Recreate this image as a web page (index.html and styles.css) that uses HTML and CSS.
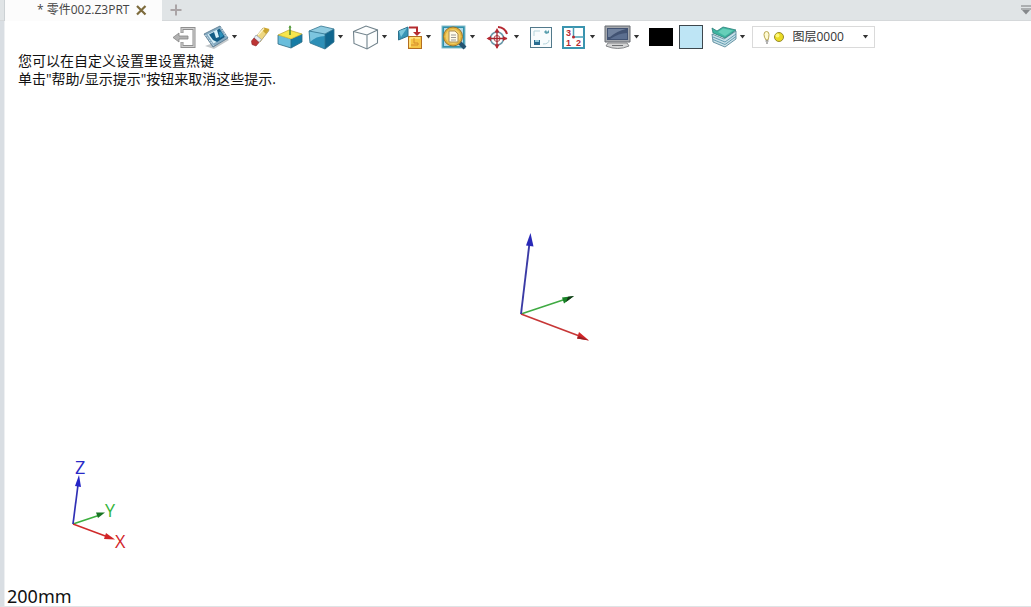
FILE: index.html
```html
<!DOCTYPE html>
<html lang="zh-CN">
<head>
<meta charset="utf-8">
<title>零件002.Z3PRT</title>
<link rel="stylesheet" href="styles.css">
</head>
<body>
<div class="app">
  <header class="tabbar">
    <div class="tab">
      <span class="tab-name">* 零件002.Z3PRT</span>
      <button class="tab-close" aria-label="关闭"><svg width="12" height="12" viewBox="0 0 12 12"><path d="M2 2L10.500 10.500M10.500 2L2 10.500" stroke="#7d6b3c" stroke-width="2.200"/></svg></button>
    </div>
    <button class="tab-add" aria-label="新建"><svg width="12" height="12" viewBox="0 0 12 12"><path d="M6 0.5V11.5M0.5 6H11.5" stroke="#aaa4a6" stroke-width="2"/></svg></button>
    <button class="tab-list" aria-label="标签列表"><svg width="10" height="10" viewBox="0 0 10 10"><path d="M0 1H10M0 4H10" stroke="#9a9da0" stroke-width="1.3"/><path d="M1 5H9L5 9.5Z" fill="#85888b"/></svg></button>
  </header>

  <main class="work">
    <div class="toolbar" role="toolbar">
      <button class="tool" aria-label="退出"><svg class="icon" viewBox="0 0 26 26"><path d="M11 9V4.500H23V22.500H11V18" fill="none" stroke="#909090" stroke-width="3"/><path d="M11 8.500V4.500H23V22.500H11V18.500" fill="none" stroke="#cfcfcf" stroke-width="1.200"/><path d="M2 13.500L8 9V12H17V15H8V18Z" fill="#b2b2b2" stroke="#858585" stroke-width=".8"/></svg></button>
      <button class="tool drop" aria-label="外观"><svg class="icon" viewBox="0 0 26 26"><path d="M2 22L11 25L26 16L24 14Z" fill="#c3c8cb"/><path d="M1 10L17 2L25 14L10 23Z" fill="#86abc2" stroke="#52758c" stroke-width=".8"/><path d="M4.500 10.500L16.500 4.500L22 13L10.500 19.500Z" fill="#d9f0f8"/><path d="M6 10.500L11 8L13 14L16 13L14 6L16.500 4.500L22 13L14 18L10 16Z" fill="#145c85"/><path d="M16 8L18 7.500L20.500 12L17 14Z" fill="#2a8fba"/><path d="M2.500 11L10.500 21.500M18 3.500L24 13" stroke="#e1edf2" stroke-dasharray="1.500 1.500"/></svg><i class="caret"></i></button>
      <button class="tool narrow" aria-label="擦除"><svg class="icon" viewBox="0 0 24 26"><path d="M8 14L16 4L22 6.500L13 18Z" fill="#eed781" stroke="#a18c52" stroke-width=".7"/><path d="M15 6L17 3.500L22.500 5L19 10Z" fill="#cba52e"/><path d="M9 11L14.500 15.500L12 18.500L7 14Z" fill="#e8edf5" stroke="#8491a5" stroke-width=".6"/><path d="M7 14L12 18.500L9 22L5 20.500L4.500 17Z" fill="#bd3535" stroke="#8a2225" stroke-width=".6"/><path d="M11 11L17 4.500" stroke="#fff7ce" stroke-width="1.300"/></svg></button>
      <button class="tool" aria-label="基准实体"><svg class="icon" viewBox="0 0 26 26"><path d="M1 11L14 15V24L1 20Z" fill="#69bddb"/><path d="M14 15L25 10V18L14 24Z" fill="#167ca5"/><path d="M1 11L12 6L25 10L14 15Z" fill="#f6e64d" stroke="#b9a22c" stroke-width=".7"/><path d="M1 11V20L14 24L25 18V10M14 15V24" fill="none" stroke="#2d6983" stroke-width=".8"/><path d="M13 2V11" stroke="#4c8a2f" stroke-width="1.500"/><path d="M11.500 4L13 1L14.500 4Z" fill="#5ba344"/></svg></button>
      <button class="tool drop" aria-label="着色"><svg class="icon" viewBox="0 0 26 26"><path d="M0 7L12 2L25 5L16 10Z" fill="#8fcbe0"/><path d="M0 7L16 10V25L1 19Z" fill="#2d8fb7"/><path d="M0 7L16 10V12Q7 12 1 18Z" fill="#7cc5df"/><path d="M16 10L25 5V18L16 25Z" fill="#10668e"/><path d="M0 7L12 2L25 5V18L16 25L1 19ZM0 7L16 10V25M16 10L25 5" fill="none" stroke="#31738f" stroke-width=".8"/></svg><i class="caret"></i></button>
      <button class="tool drop" aria-label="线框"><svg class="icon" viewBox="0 0 26 26"><path d="M0.500 7.500L13 2L24.500 6V19L14 25L1 19.500Z" fill="#fdfefe" stroke="#71838c" stroke-width="1.100"/><path d="M0.500 7.500L14 11L24.500 6M14 11V25" fill="none" stroke="#71838c" stroke-width="1.100"/></svg><i class="caret"></i></button>
      <button class="tool drop" aria-label="对齐视图"><svg class="icon" viewBox="0 0 26 26"><path d="M1.500 7L11 3V12L1.500 16Z" fill="#3996b7" stroke="#2d718c"/><path d="M2 7L10 4L4 13Z" fill="#7cc8dc"/><path d="M12 3.500H20V9" fill="none" stroke="#b42c2f" stroke-width="2"/><path d="M16 8H24L20 12Z" fill="#b42c2f"/><rect x="11.500" y="12.500" width="13" height="12" fill="#f6c544" stroke="#b36e21"/><path d="M13 14H23M13 14V23" stroke="#ffe98b" stroke-width="1.500"/><path d="M17 14V19H21V21H14" stroke="#d58a2b" fill="none"/></svg><i class="caret"></i></button>
      <button class="tool drop" aria-label="缩放"><svg class="icon" viewBox="0 0 26 26"><rect x="1" y="2" width="23" height="22" fill="#2e91ac" stroke="#85bdcb"/><rect x="3" y="4" width="19" height="18" fill="#b5d9e3"/><path d="M18 18L24 24" stroke="#24526f" stroke-width="4"/><circle cx="12" cy="12.500" r="9.500" fill="#e3b43d" stroke="#98732e"/><circle cx="12" cy="12.500" r="7.500" fill="#f3cf69"/><path d="M8 7H14L17 10V18H8Z" fill="#fffbe9" stroke="#a98d54"/><path d="M10 11H15M10 13.500H15M10 16H15" stroke="#999"/></svg><i class="caret"></i></button>
      <button class="tool drop" aria-label="定位"><svg class="icon" viewBox="0 0 26 26"><circle cx="12" cy="14.500" r="6.500" fill="none" stroke="#6c99aa" stroke-width="1.700"/><circle cx="12" cy="14.500" r="3" fill="#fff" stroke="#a94850"/><path d="M12 6V24M3 14.500H22" stroke="#a9252d" stroke-width="1.300"/><path d="M12 4L9.500 8.500H14.500ZM12 25L9.500 20.500H14.500ZM1.500 14.500L6 12V17ZM22.500 14.500L18 12V17Z" fill="#b52831"/><path d="M13 3Q20 3.500 22 10" fill="none" stroke="#b52831" stroke-width="2"/></svg><i class="caret"></i></button>
      <button class="tool" aria-label="窗口缩放"><svg class="icon" viewBox="0 0 26 26"><rect x="1.500" y="3.500" width="21" height="20" fill="#f8fcfd" stroke="#52798b"/><path d="M5 12V7H11M20 16Q20 20 14 20" fill="none" stroke="#b5d4db"/><path d="M5 16H11V21H5Z" fill="#286c91"/><path d="M6 16H10V18H6Z" fill="#95cad9"/><path d="M15 8L17 6L18 8L20 6V9L17 10Z" fill="#5a9fae"/></svg></button>
      <button class="tool drop" aria-label="多视图"><svg class="icon" viewBox="0 0 26 26"><rect x="2" y="3" width="21" height="21" fill="#fff" stroke="#3a94af" stroke-width="2"/><path d="M12.500 3V14M12 13H23" stroke="#4b9fb6" stroke-width="1.500"/><g class="view-digits"><text x="5" y="12">3</text><text x="5" y="22">1</text><text x="15" y="22">2</text></g><circle cx="12.500" cy="13" r="1.500" fill="#b52831"/></svg><i class="caret"></i></button>
      <button class="tool drop" aria-label="显示"><svg class="icon" viewBox="0 0 26 26"><path d="M0 2H25V18H0Z" fill="#a5a8ad" stroke="#666a71"/><path d="M2 4H23V16H2Z" fill="#425373"/><path d="M3 5H21Q12 7 5 13H3Z" fill="#71829e"/><path d="M5 15Q14 9 22 9V15Z" fill="#5c6f90"/><path d="M3 19H22L24 22Q13 27 1 22Z" fill="#d4d5d6" stroke="#85878a"/><path d="M7 21.500H18" stroke="#6e7073"/></svg><i class="caret"></i></button>
      <button class="tool narrow" aria-label="前景色"><span class="swatch black"></span></button>
      <button class="tool" aria-label="背景色"><span class="swatch sky"></span></button>
      <button class="tool drop" aria-label="图层管理"><svg class="icon" viewBox="0 0 26 26"><path d="M1 10L13 15L25 7V15L14 23L2 18Z" fill="#c9e1e8" stroke="#497d91" stroke-width=".8"/><path d="M2 13L14 18L25 10M2 15.500L14 20.500L25 12.500" fill="none" stroke="#5794aa" stroke-width=".9"/><path d="M1 4L6 7L12 3L25 6L14 14L2 9Z" fill="#3fb5a0" stroke="#287d79" stroke-width=".8"/><path d="M7 8L12 4.500L22 6.500L14 12Z" fill="#66cfb9"/></svg><i class="caret"></i></button>
      <label class="layer">
        <svg class="layer-state" viewBox="0 0 24 14"><path d="M3 10Q1 7 1 4.500A2.500 3 0 0 1 6 4.500Q6 7 5 10Z" fill="#fffbd2" stroke="#b8a651"/><path d="M2.500 11H5.500M3 13H5" stroke="#666"/><circle cx="16" cy="7" r="4.500" fill="#eadb24" stroke="#978b2e"/><circle cx="14.500" cy="5.500" r="2" fill="#fff879"/></svg>
        <select class="layer-select" aria-label="图层"><option>图层0000</option></select>
        <i class="caret"></i>
      </label>
    </div>

    <section class="viewport">
      <p class="hint">您可以在自定义设置里设置热键<br>单击"帮助/显示提示"按钮来取消这些提示.</p>
      <svg class="origin" viewBox="0 0 80 120" width="80" height="120">
        <path d="M6 87L51 72" stroke="#3faa42" stroke-width="1.600"/><path d="M47 70.500L59 69L49 76.500Z" fill="#188326"/><path d="M53 69.800L59 69L51 75Z" fill="#143719"/>
        <path d="M6 87L67 110" stroke="#c73636" stroke-width="1.700"/><path d="M64 105L74 113.500L62 111.500Z" fill="#d22528"/><path d="M62 111.500L74 113.500L64 109Z" fill="#972126"/>
        <path d="M6 87L14.500 16" stroke="#3b3ba5" stroke-width="1.900"/><path d="M15.500 6L18.500 19.500L11 18.500Z" fill="#2929b8"/>
      </svg>
      <svg class="compass" viewBox="0 0 70 94" width="70" height="94">
        <path d="M9 67L36 58" stroke="#3baf3e" stroke-width="1.500"/><path d="M32 55.500L41 55.500L34 61Z" fill="#187523"/>
        <path d="M9 67L44 80" stroke="#d02b2b" stroke-width="1.500"/><path d="M42 76L51 82.500L40 82Z" fill="#d22528"/>
        <path d="M9 67L14 28" stroke="#3030b5" stroke-width="1.700"/><path d="M15 18L17 30L11 29Z" fill="#2525c7"/>
        <text class="axis z" x="11" y="17">Z</text><text class="axis y" x="41" y="60">Y</text><text class="axis x" x="51" y="91">X</text>
      </svg>
      <span class="scale">200mm</span>
    </section>
  </main>
</div>
</body>
</html>
```
FILE: styles.css
```css
* { box-sizing: border-box; }
body { margin: 0; background: #fff; color: #111; font-family: "Noto Sans", "Noto Sans CJK SC", sans-serif; }
button { padding: 0; border: 0; background: none; }
svg { display: block; overflow: visible; }
.app { display: flex; flex-direction: column; height: 100vh; }

.tabbar { display: flex; align-items: center; height: 21px; padding-left: 4px; background: #e0e4e6; border-bottom: 1px solid #d5d8da; }
.tab { display: flex; align-items: center; gap: 6px; height: 21px; padding: 0 15px 0 32px; background: #fcfcfc; border-left: 1px solid #ccd1d4; }
.tab-name { font-family: "Open Sans", "Noto Sans CJK SC", sans-serif; font-size: 12px; line-height: 20px; color: #444; white-space: nowrap; }
.tab-add { margin-left: 8px; }
.tab-list { margin-left: auto; }

.work { flex: 1; display: flex; flex-direction: column; min-height: 0; border-left: 4px solid #d9dee3; border-bottom: 1px solid #dfe3e5; box-shadow: inset 1px 0 #eef0f2; }
.toolbar { display: flex; align-items: center; justify-content: center; gap: 6px; height: 31px; padding-left: 10px; }
.tool { display: flex; align-items: center; flex: none; width: 26px; height: 26px; }
.tool.drop { width: 38px; }
.tool.narrow { width: 24px; }
.icon { flex: none; width: 26px; height: 26px; }
.narrow .icon { width: 24px; }
.caret { flex: none; width: 6px; height: 4px; margin-left: 3px; background: #333; clip-path: polygon(0 0, 100% 0, 50% 100%); }
.view-digits { font: bold 9px "Liberation Sans", sans-serif; fill: #b52831; }
.swatch { width: 24px; height: 18px; }
.black { background: #000; }
.sky { height: 24px; background: #bee5f5; border: 1px solid #3d474d; }
.layer { display: flex; align-items: center; flex: none; width: 123px; height: 22px; margin-left: -3px; padding: 0 5px 0 10px; background: #fff; border: 1px solid #dadada; }
.layer-state { flex: none; width: 24px; height: 14px; }
.layer-select { flex: 1; min-width: 0; height: 20px; margin-left: 6px; padding: 0; border: 0; background: none; appearance: none; font: 12px "Open Sans", "Noto Sans CJK SC", sans-serif; color: #333; }

.viewport { position: relative; flex: 1; min-height: 0; overflow: hidden; }
.hint { margin: 0; padding-left: 14px; font-family: "Open Sans", "Noto Sans CJK SC", sans-serif; font-size: 14px; line-height: 18px; white-space: nowrap; }
.origin { position: absolute; left: calc(50% - 3px); top: calc(50% - 102px); }
.compass { position: absolute; left: 60px; bottom: 55px; }
.axis { font: 18px "Open Sans", sans-serif; }
.x { fill: #d22528; }
.y { fill: #37b53b; }
.z { fill: #2929c7; }
.scale { position: absolute; left: 3px; bottom: 0; font-size: 18px; line-height: 20px; }
```
